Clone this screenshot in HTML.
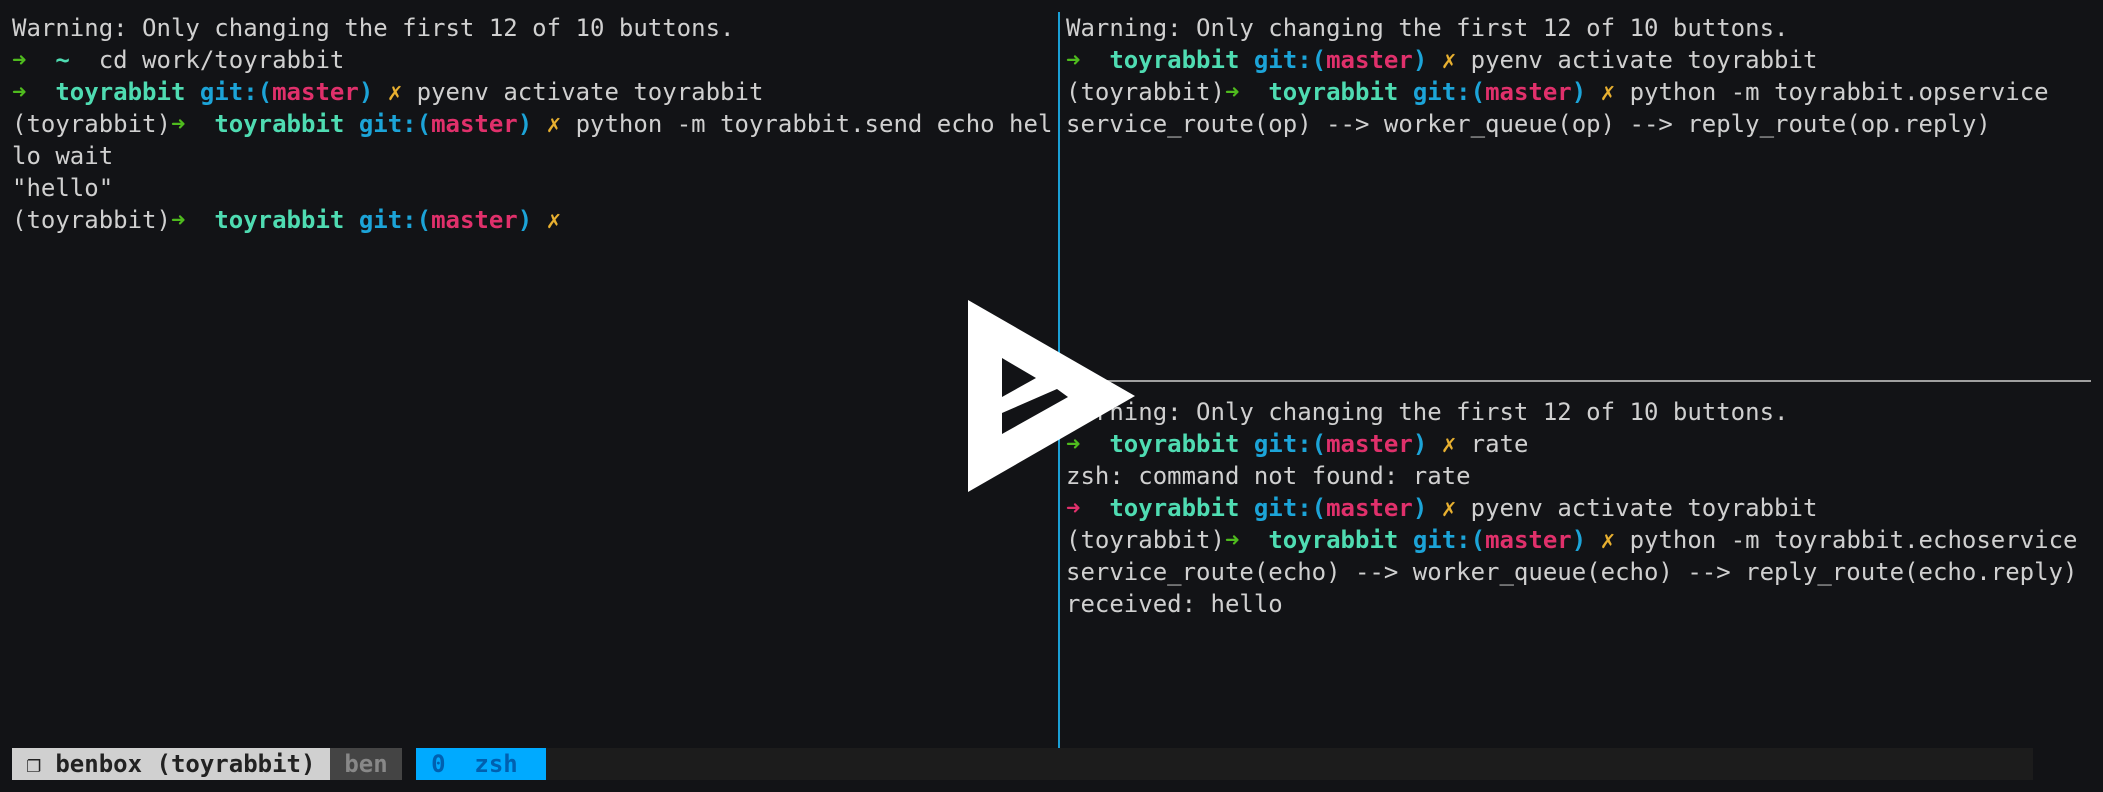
<!DOCTYPE html>
<html><head><meta charset="utf-8"><style>
html,body{margin:0;padding:0;background:#121316;width:2103px;height:792px;overflow:hidden;position:relative}
pre{position:absolute;margin:0;font-family:"DejaVu Sans Mono","Liberation Mono",monospace;font-size:24px;line-height:32px;color:#d0d0d0;white-space:pre}
.g{color:#4fbb1e}.t{color:#4fdcb2;font-weight:bold}.b{color:#1ca4d8;font-weight:bold}.p{color:#e0306b;font-weight:bold}.y{color:#e8b030}.r{color:#e0306b}
</style></head><body>
<pre style="left:12px;top:12px">Warning: Only changing the first 12 of 10 buttons.
<span class="g">➜</span>  <span class="t">~</span>  cd work/toyrabbit
<span class="g">➜</span>  <span class="t">toyrabbit</span> <span class="b">git:(</span><span class="p">master</span><span class="b">)</span> <span class="y">✗</span> pyenv activate toyrabbit
(toyrabbit)<span class="g">➜</span>  <span class="t">toyrabbit</span> <span class="b">git:(</span><span class="p">master</span><span class="b">)</span> <span class="y">✗</span> python -m toyrabbit.send echo hel
lo wait
"hello"
(toyrabbit)<span class="g">➜</span>  <span class="t">toyrabbit</span> <span class="b">git:(</span><span class="p">master</span><span class="b">)</span> <span class="y">✗</span></pre>
<div style="position:absolute;left:1058px;top:12px;width:2px;height:736px;background:#1a9fd5"></div>
<div style="position:absolute;left:1060px;top:380px;width:1031px;height:2px;background:#a0a0a0"></div>
<pre style="left:1066px;top:12px">Warning: Only changing the first 12 of 10 buttons.
<span class="g">➜</span>  <span class="t">toyrabbit</span> <span class="b">git:(</span><span class="p">master</span><span class="b">)</span> <span class="y">✗</span> pyenv activate toyrabbit
(toyrabbit)<span class="g">➜</span>  <span class="t">toyrabbit</span> <span class="b">git:(</span><span class="p">master</span><span class="b">)</span> <span class="y">✗</span> python -m toyrabbit.opservice
service_route(op) --&gt; worker_queue(op) --&gt; reply_route(op.reply)</pre>
<pre style="left:1066px;top:396px">Warning: Only changing the first 12 of 10 buttons.
<span class="g">➜</span>  <span class="t">toyrabbit</span> <span class="b">git:(</span><span class="p">master</span><span class="b">)</span> <span class="y">✗</span> rate
zsh: command not found: rate
<span class="r">➜</span>  <span class="t">toyrabbit</span> <span class="b">git:(</span><span class="p">master</span><span class="b">)</span> <span class="y">✗</span> pyenv activate toyrabbit
(toyrabbit)<span class="g">➜</span>  <span class="t">toyrabbit</span> <span class="b">git:(</span><span class="p">master</span><span class="b">)</span> <span class="y">✗</span> python -m toyrabbit.echoservice
service_route(echo) --&gt; worker_queue(echo) --&gt; reply_route(echo.reply)
received: hello</pre>
<div style="position:absolute;left:12px;top:748px;width:2021px;height:32px;background:#1c1c1c"></div>
<div style="position:absolute;left:12px;top:748px;width:318px;height:32px;background:#d0d0d0"></div>
<div style="position:absolute;left:330px;top:748px;width:72px;height:32px;background:#444"></div>
<div style="position:absolute;left:402px;top:748px;width:14px;height:32px;background:#121316"></div>
<div style="position:absolute;left:416px;top:748px;width:130px;height:32px;background:#00aaff"></div>
<pre style="left:12px;top:748px;color:#222;font-weight:bold"> <span style="font-weight:normal">❐</span> benbox (toyrabbit)  <span style="color:#888">ben</span>   <span style="color:#0060b0">0  zsh</span></pre>
<svg style="position:absolute;left:0;top:0" width="2103" height="792">
<polygon points="968,300 1135,396 968,492" fill="#fff"/>
<polygon points="1002,358 1036,378 1002,397" fill="#121316"/>
<polygon points="1002,413 1057,389 1068,397 1002,434" fill="#121316"/>
</svg>
</body></html>
